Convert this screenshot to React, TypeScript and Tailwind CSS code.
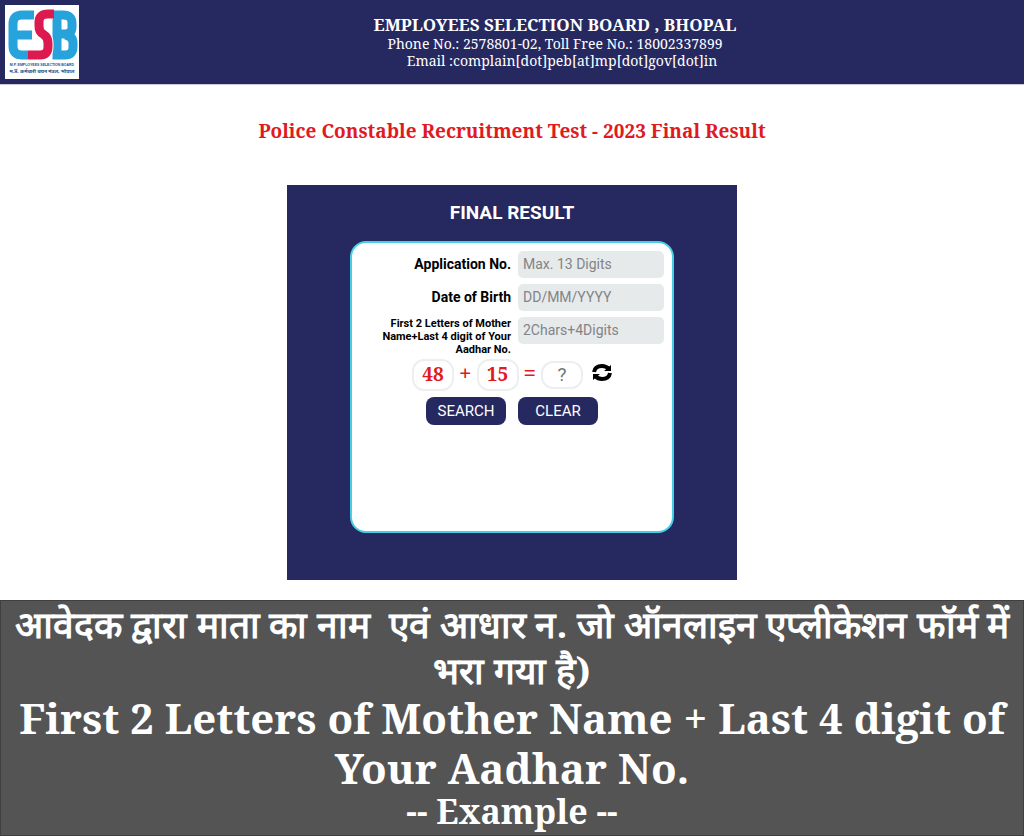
import React from 'react';

const fields = [
  { id: 'appNo', label: 'Application No.', placeholder: 'Max. 13 Digits', small: false },
  { id: 'dob', label: 'Date of Birth', placeholder: 'DD/MM/YYYY', small: false },
  {
    id: 'aadhar',
    label: 'First 2 Letters of Mother Name+Last 4 digit of Your Aadhar No.',
    placeholder: '2Chars+4Digits',
    small: true,
  },
];

function Logo() {
  return (
    <svg viewBox="0 0 74 74" className="w-[74px] h-[74px]" role="img" aria-label="ESB">
      <rect width="74" height="74" fill="#fff" />
      <g fill="none" strokeWidth="9">
        <path d="M29 10H17Q8 10 8 19V41Q8 50 17 50H23M8 30H27" stroke="#27a3dc" />
        <path d="M46 10H58Q67 10 67 18V22Q67 29 60 29H54M60 30Q68 31 68 38V42Q68 50 60 50H52V12" stroke="#27a3dc" />
        <path d="M48 9H43Q34 9 34 17V21Q34 27 38 29Q43 32 43 38V42Q43 50 35 50H24" stroke="#fff" strokeWidth="11" />
        <path d="M49 9H43Q34 9 34 17V21Q34 27 38 29Q43 32 43 38V42Q43 50 35 50H23" stroke="#dc1a50" />
      </g>
      <text x="37" y="61" textAnchor="middle" fontSize="3.5" fontWeight="700" fill="#1c4f86" fontFamily="Liberation Sans, sans-serif">
        M.P. EMPLOYEES SELECTION BOARD
      </text>
      <text x="37" y="68" textAnchor="middle" fontSize="5" fontWeight="700" fill="#1c4f86" fontFamily="Noto Sans, sans-serif">
        म.प्र. कर्मचारी चयन मंडल, भोपाल
      </text>
    </svg>
  );
}

function RefreshIcon() {
  return (
    <svg viewBox="0 0 20 17" className="w-5 h-[17px]" fill="none" stroke="#000" strokeWidth="4">
      <path d="M2 8Q3 2 10 2Q14 2 17 5" />
      <path d="M18 9Q17 15 10 15Q6 15 3 12" />
      <path d="M19 1V7H12Z M1 16V10H8Z" fill="#000" stroke="none" />
    </svg>
  );
}

export default function App() {
  const [values, setValues] = React.useState<Record<string, string>>({});
  const [answer, setAnswer] = React.useState('');

  const clear = () => {
    setValues({});
    setAnswer('');
  };

  return (
    <div className="min-h-screen flex flex-col bg-white font-['Noto_Serif','DejaVu_Serif',serif]">
      <header className="flex items-center bg-[#262860] text-white h-[85px] border-b border-[#c9c9dc]">
        <div className="w-[86px] pl-[5px] shrink-0">
          <Logo />
        </div>
        <div className="flex-1 text-center text-[14px] leading-[17px]">
          <h1 className="text-[17px] leading-5 font-bold">EMPLOYEES SELECTION BOARD , BHOPAL</h1>
          <p>Phone No.: 2578801-02, Toll Free No.: 18002337899</p>
          <p className="pl-[14px]">Email :complain[dot]peb[at]mp[dot]gov[dot]in</p>
        </div>
      </header>

      <main className="flex flex-col items-center px-4 pb-5">
        <h2 className="mt-8 text-[19px] leading-7 font-bold text-[#e01b1f] text-center">
          Police Constable Recruitment Test - 2023 Final Result
        </h2>

        <section className="mt-10 w-full max-w-[450px] min-h-[395px] bg-[#262860] pb-10 font-['Roboto',sans-serif]">
          <h3 className="py-[14px] text-center text-white text-[19px] leading-7 font-bold">FINAL RESULT</h3>
          <form
            className="mx-auto w-[324px] min-h-[292px] rounded-2xl border-2 border-[#45cfe6] bg-white pt-2 px-2"
            onSubmit={(e) => e.preventDefault()}
          >
            <div className="flex flex-col gap-[6px]">
              {fields.map((f) => (
                <div key={f.id} className="flex items-start gap-[7px]">
                  <label
                    htmlFor={f.id}
                    className={
                      f.small
                        ? 'flex-1 pl-4 text-right text-[11px] leading-[13px] font-bold'
                        : 'flex-1 text-right text-sm leading-[27px] font-bold'
                    }
                  >
                    {f.label}
                  </label>
                  <input
                    id={f.id}
                    placeholder={f.placeholder}
                    value={values[f.id] || ''}
                    onChange={(e) => setValues({ ...values, [f.id]: e.target.value })}
                    className="w-[146px] h-[27px] px-[5px] pb-[2px] rounded-[5px] bg-[#e7eaeb] text-sm placeholder:text-[#828486]"
                  />
                </div>
              ))}
            </div>

            <div className="mt-[3px] flex items-center justify-center gap-[5px] text-[19px] font-bold text-[#e01b1f] font-['Noto_Serif','DejaVu_Serif',serif]">
              <span className="w-[42px] h-8 leading-[26px] text-center rounded-xl border-2 border-[#eceff0]">48</span>
              <span className="text-[22px] leading-6 pb-[6px]">+</span>
              <span className="w-[42px] h-8 leading-[26px] text-center rounded-xl border-2 border-[#eceff0]">15</span>
              <span className="text-[22px] leading-6 pb-[6px]">=</span>
              <input
                aria-label="Answer"
                placeholder="?"
                value={answer}
                onChange={(e) => setAnswer(e.target.value)}
                className="w-[42px] h-7 text-center rounded-xl border-2 border-[#eceff0] font-normal font-['Roboto',sans-serif] placeholder:text-[#757575]"
              />
              <button type="button" aria-label="Refresh" className="ml-1 pb-[6px]">
                <RefreshIcon />
              </button>
            </div>

            <div className="mt-[6px] flex justify-center gap-3">
              <button type="submit" className="w-20 h-7 rounded-lg bg-[#262860] text-white text-[15px]">
                SEARCH
              </button>
              <button type="button" onClick={clear} className="w-20 h-7 rounded-lg bg-[#262860] text-white text-[15px]">
                CLEAR
              </button>
            </div>
          </form>
        </section>
      </main>

      <section className="flex-1 border border-[#3f3f3f] bg-[#545454] text-white text-center font-bold px-2">
        <p className="text-[37px] leading-[46px] whitespace-pre-wrap">
          {'आवेदक द्वारा माता का नाम  एवं आधार न. जो ऑनलाइन एप्लीकेशन फॉर्म में भरा गया है)'}
        </p>
        <p className="text-[42px] leading-[50px]">First 2 Letters of Mother Name + Last 4 digit of Your Aadhar No.</p>
        <p className="text-[34px] leading-9">-- Example --</p>
      </section>
    </div>
  );
}
